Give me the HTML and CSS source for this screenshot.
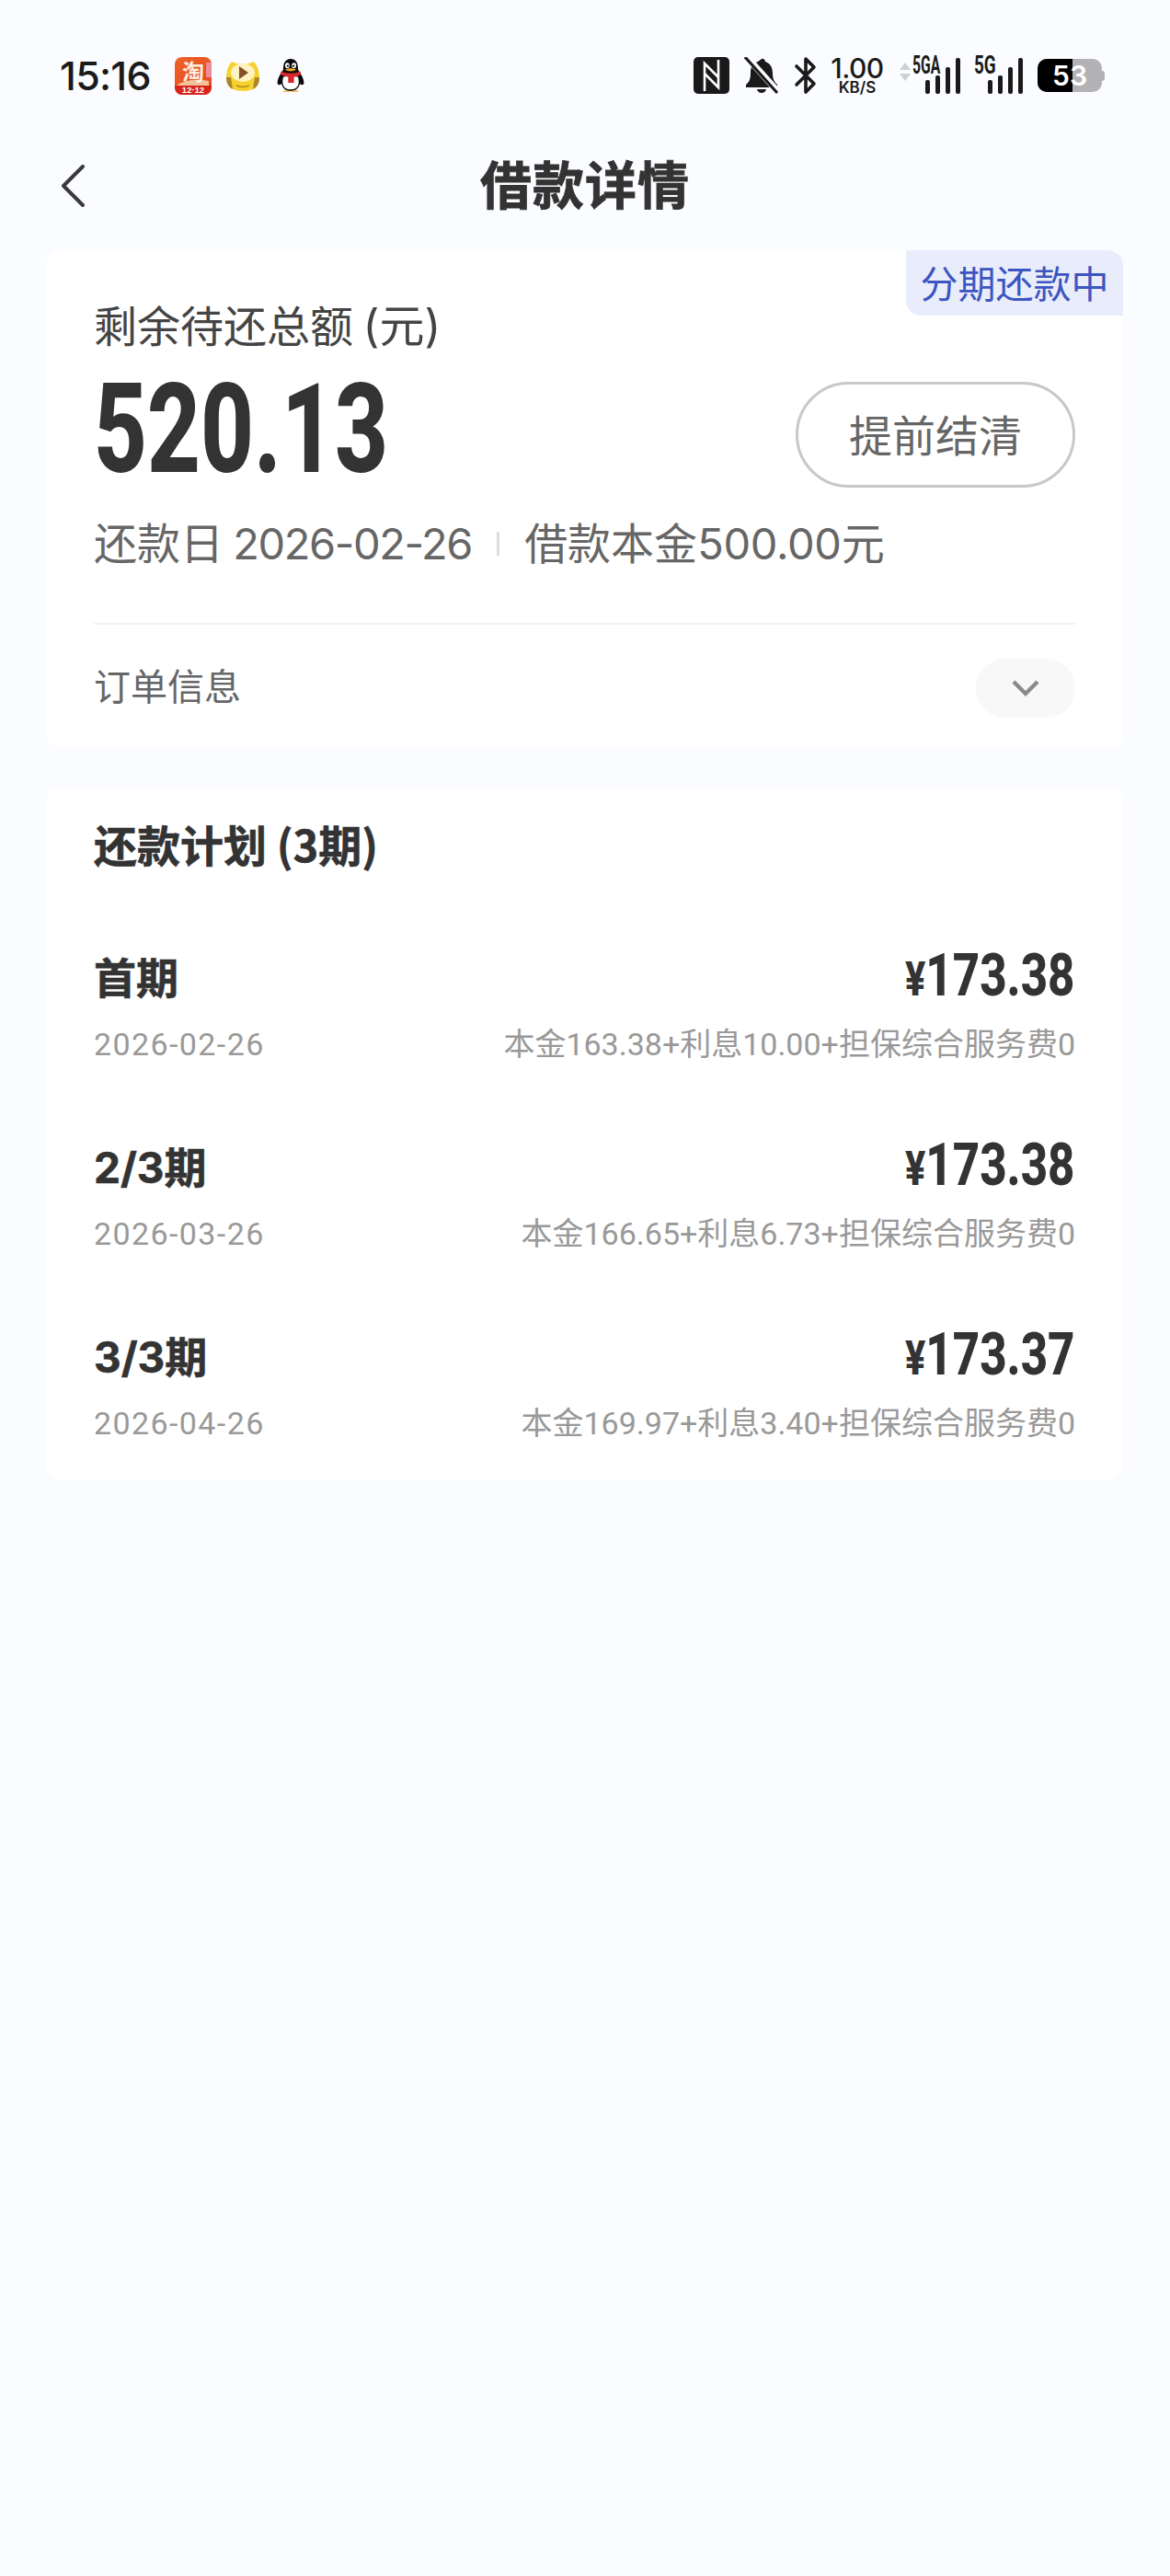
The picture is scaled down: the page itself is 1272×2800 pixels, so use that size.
FILE: index.html
```html
<!DOCTYPE html>
<html lang="zh-CN">
<head>
<meta charset="utf-8">
<title>借款详情</title>
<link rel="stylesheet" href="styles.css">
</head>
<body>
<div class="page">
  <header class="status">
    <div class="status-left">
      <span class="clock">15:16</span>
      <div class="apps">
        <svg class="app" width="40" height="41" viewBox="0 0 40 41"><defs><linearGradient id="tb" x1="0" y1="0" x2="1" y2="1"><stop offset="0" stop-color="#f0622a"/><stop offset="1" stop-color="#e4471e"/></linearGradient></defs><rect width="40" height="41" rx="8" fill="url(#tb)"/><path d="M34 6h6v16h-6z" fill="#ef8c9a"/><path d="M3 30q14-8 34-4v5H3z" fill="#f2c19c"/><path d="M0 31h40v2a8 8 0 0 1-8 8H8a8 8 0 0 1-8-8z" fill="#d9241b"/><text class="app-han" x="20" y="25">淘</text><text class="app-text" x="20" y="39">12·12</text></svg>
        <svg class="app" width="40" height="40" viewBox="0 0 40 40"><path d="M8 5q6 3 12 3t12-3q6 7 6 17q0 15-18 15Q2 37 2 22q0-10 6-17z" fill="#f6d22f"/><path d="M2 22q0 10 7 13l-2-13zM38 22q0 10-7 13l2-13z" fill="#a8862e"/><ellipse cx="20" cy="17" rx="13" ry="10" fill="#fdf3c0"/><path d="M16 10l10 7-10 7z" fill="#84502a"/><path d="M13 31q7 3 14 0" fill="none" stroke="#b78f1e" stroke-width="1.5"/></svg>
        <svg class="app" width="36" height="42" viewBox="0 0 40 42"><path d="M20 1c-7 0-9 6-9 13-3 5-7 10-7 16 0 3 3 3 5 1 1 5 5 9 11 9s10-4 11-9c2 2 5 2 5-1 0-6-4-11-7-16 0-7-2-13-9-13z" fill="#0c0c0c"/><path d="M11 23q9-3 18 0c2 8 0 15-9 15s-11-7-9-15z" fill="#fff"/><path d="M8 16q12 5 24 0v4q-4 3-8 3v7h-7v-7q-6-1-9-3z" fill="#d9262c"/><ellipse cx="16" cy="9" rx="2.6" ry="3.4" fill="#fff"/><ellipse cx="24" cy="9" rx="2.6" ry="3.4" fill="#fff"/><circle cx="16.5" cy="9.5" r="1.2" fill="#000"/><circle cx="23.5" cy="9.5" r="1.2" fill="#000"/><path d="M13 14q7-3 14 0-7 4-14 0z" fill="#f2a51f"/><path d="M11 40h8M21 40h8" stroke="#f2a51f" stroke-width="1.6"/></svg>
      </div>
    </div>
    <div class="status-right">
      <svg class="ic-nfc" width="39" height="40" viewBox="0 0 39 40"><rect width="39" height="40" rx="5" fill="#1a1a1a"/><path d="M12 37V7l15 15M27 3v30L12 18" fill="none" stroke="#fff" stroke-width="2.6"/></svg>
      <svg class="ic-bell" width="38" height="40" viewBox="0 0 38 40"><path d="M18 2a3 3 0 0 1 4 3c6 2 8 7 8 13 0 6 2 9 5 12v3H1v-3c4-3 5-7 5-13 0-7 3-10 8-12z" fill="#1a1a1a" transform="translate(1 0)"/><path d="M14 35h10q-1 4-5 4t-5-4z" fill="#1a1a1a"/><path d="M3 0l34 38" stroke="#fbfcff" stroke-width="7"/><path d="M1 0l35 39" stroke="#1a1a1a" stroke-width="3"/></svg>
      <svg class="ic-bt" width="26" height="42" viewBox="0 0 24 42"><path d="M2 11l19 19-9 9V3l9 9L2 31" fill="none" stroke="#1a1a1a" stroke-width="3.6" stroke-linejoin="round" stroke-linecap="round"/></svg>
      <div class="speed"><span class="speed-num">1.00</span><span class="speed-unit">KB/S</span></div>
      <div class="signal sig-a">
        <svg class="arrows" width="12" height="20" viewBox="0 0 12 20"><path d="M6 0l6 8H0zM6 20l6-8H0z" fill="#cfd0d2"/></svg>
        <span class="net net-a">5GA</span>
        <div class="bars"><i class="b1"></i><i class="b2"></i><i class="b3"></i><i class="b4"></i></div>
      </div>
      <div class="signal sig-b">
        <span class="net net-b">5G</span>
        <div class="bars"><i class="b1"></i><i class="b2"></i><i class="b3"></i><i class="b4"></i></div>
      </div>
      <div class="battery"><div class="batt-fill"></div><div class="batt-cap"></div><span class="batt-num">53</span></div>
    </div>
  </header>

  <nav class="nav">
    <svg class="back" width="28" height="46" viewBox="0 0 28 46"><path d="M24 2L3 23l21 21" fill="none" stroke="#3a3a3a" stroke-width="4" stroke-linecap="round" stroke-linejoin="round"/></svg>
    <h1 class="nav-title">借款详情</h1>
  </nav>

  <section class="card summary">
    <span class="badge">分期还款中</span>
    <div class="sum-label">剩余待还总额 <span class="paren">(元)</span></div>
    <div class="sum-main">
      <span class="sum-amount">520.13</span>
      <button class="settle">提前结清</button>
    </div>
    <div class="sum-meta">
      <span class="meta-date">还款日 <span class="num">2026-02-26</span></span>
      <i class="meta-sep"></i>
      <span class="meta-base">借款本金<span class="num-tight">500.00</span>元</span>
    </div>
    <div class="order">
      <span class="order-label">订单信息</span>
      <span class="order-toggle">
        <svg width="32" height="22" viewBox="0 0 32 22"><path d="M3 4l13 13L29 4" fill="none" stroke="#8a8a8a" stroke-width="4.4"/></svg>
      </span>
    </div>
  </section>

  <section class="card plan">
    <h2 class="plan-title">还款计划 (3期)</h2>
    <div class="rows">
      <div class="row">
        <div class="row-top"><span class="term">首期</span><span class="pay"><small>¥</small>173.38</span></div>
        <div class="row-sub"><span class="sub-date">2026-02-26</span><span>本金163.38+利息10.00+担保综合服务费0</span></div>
      </div>
      <div class="row">
        <div class="row-top"><span class="term">2/3期</span><span class="pay"><small>¥</small>173.38</span></div>
        <div class="row-sub"><span class="sub-date">2026-03-26</span><span>本金166.65+利息6.73+担保综合服务费0</span></div>
      </div>
      <div class="row">
        <div class="row-top"><span class="term">3/3期</span><span class="pay"><small>¥</small>173.37</span></div>
        <div class="row-sub"><span class="sub-date">2026-04-26</span><span>本金169.97+利息3.40+担保综合服务费0</span></div>
      </div>
    </div>
  </section>
</div>
</body>
</html>
```
FILE: styles.css
```css
* { box-sizing: border-box; }
html, body { margin: 0; padding: 0; }
body {
  width: 1272px;
  height: 2800px;
  background: #fbfcff;
  font-family: "Noto Sans CJK SC", "Inter", sans-serif;
  overflow: hidden;
}
.page { padding: 0 51px 0 50px; }

.status {
  height: 125px;
  margin: 0 -51px 0 -50px;
  padding: 60px 0 0 65px;
  display: flex;
  justify-content: space-between;
  align-items: flex-start;
}
.status-left { display: flex; align-items: center; gap: 26px; height: 44px; }
.clock { font: 500 43px/44px "Inter", sans-serif; color: #1a1a1a; letter-spacing: -.7px; }
.apps { display: flex; gap: 14px; align-items: center; }
.app { display: block; overflow: visible; }
.app-han { font: 700 24px "Noto Sans CJK SC", sans-serif; fill: #fdf0e0; text-anchor: middle; }
.app-text { font: 700 9.5px "Liberation Sans", sans-serif; fill: #fff; text-anchor: middle; }
.status-right { display: flex; align-items: center; height: 44px; padding-right: 74px; }
.ic-nfc { margin-right: 16px; }
.ic-bell { margin-right: 16px; }
.ic-bt { margin-right: 11px; }
.speed { display: flex; flex-direction: column; align-items: center; width: 64px; color: #1a1a1a; font-family: "Inter", sans-serif; }
.speed-num { font-size: 30px; font-weight: 500; line-height: 26px; letter-spacing: -.5px; }
.speed-unit { font-size: 17px; font-weight: 600; line-height: 16px; }
.signal { position: relative; height: 44px; }
.sig-a { width: 66px; margin-left: 14px; }
.sig-b { width: 53px; margin-left: 15px; }
.arrows { position: absolute; left: 0; top: 8px; }
.net { position: absolute; top: -4px; font: 700 27px/30px "Roboto", sans-serif; color: #1a1a1a; transform-origin: 0 50%; }
.net-a { left: 14px; transform: scaleX(.58); }
.net-b { left: 0; transform: scaleX(.7); }
.bars { position: absolute; right: 0; bottom: 2px; display: flex; align-items: flex-end; gap: 6px; }
.bars i { display: block; width: 5px; border-radius: 2px; background: #1a1a1a; }
.b1 { height: 15px; }
.b2 { height: 20px; }
.b3 { height: 29px; }
.b4 { height: 39px; }
.battery {
  position: relative;
  width: 70px;
  height: 36px;
  margin-left: 16px;
  border-radius: 10px;
  background: #b3b3b5;
}
.batt-fill { position: absolute; left: 0; top: 0; bottom: 0; width: 38px; background: #000; border-radius: 10px 0 0 10px; }
.batt-cap { position: absolute; right: -3px; top: 13px; width: 3px; height: 11px; border-radius: 0 3px 3px 0; background: #b3b3b5; }
.batt-num { position: absolute; left: 0; right: 0; top: 0; text-align: center; font: 600 30px/36px "Inter", sans-serif; color: #fff; }

.nav {
  height: 147px;
  position: relative;
  display: flex;
  align-items: center;
  justify-content: center;
  padding-bottom: 2px;
}
.back { position: absolute; left: 16px; top: 54px; }
.nav-title { margin: 0 0 0 1px; font-size: 56px; line-height: 78px; font-weight: 700; color: #333; letter-spacing: 1px; -webkit-text-stroke: .8px #333; }

.card { background: #fff; border-radius: 16px; position: relative; }
.summary { height: 541px; padding: 50px 52px 0 52px; overflow: hidden; }
.badge {
  position: absolute;
  right: 0;
  top: 0;
  width: 236px;
  height: 71px;
  background: #e9edfb;
  border-radius: 0 16px 0 16px;
  color: #3d55c0;
  font-size: 41px;
  line-height: 68px;
  text-align: center;
}
.sum-label { font-size: 47px; line-height: 60px; color: #444; }
.paren { font-family: "Inter", "Noto Sans CJK SC", sans-serif; font-size: 49px; }
.sum-main { display: flex; justify-content: space-between; align-items: center; height: 124px; margin-top: 25px; }
.sum-amount {
  display: inline-block;
  width: 316px;
  margin-bottom: 10px;
  font: 800 136px/124px "Roboto", sans-serif;
  color: #333;
  white-space: nowrap;
  transform-origin: 0 50%;
  transform: scaleX(.74);
}
.settle {
  width: 304px;
  height: 115px;
  border: 3px solid #c8c8c8;
  border-radius: 58px;
  background: #fff;
  color: #666;
  font-family: inherit;
  font-size: 47px;
  padding: 0 0 4px;
}
.sum-meta { display: flex; align-items: center; margin-top: 26px; font: 400 47px/62px "Inter", "Noto Sans CJK SC", sans-serif; color: #666; }
.meta-date { word-spacing: -3px; }
.num { letter-spacing: -1.4px; }
.num-tight { letter-spacing: -.3px; }
.meta-sep { display: block; width: 3px; height: 26px; background: #ddd; margin: 0 27px; }
.order {
  margin-top: 55px;
  border-top: 2px solid #f2f2f2;
  height: 136px;
  display: flex;
  justify-content: space-between;
  align-items: center;
}
.order-label { font-size: 40px; color: #666; margin-bottom: 5px; }
.order-toggle { width: 108px; height: 64px; margin-top: 4px; border-radius: 32px; background: #f8f8f8; display: flex; align-items: center; justify-content: center; }

.plan { margin-top: 43px; height: 752px; padding: 0 52px; }
.plan-title { margin: 0; padding-top: 31px; font-size: 47px; line-height: 60px; font-weight: 700; color: #333; -webkit-text-stroke: .6px #333; }
.rows { margin-top: 81px; display: flex; flex-direction: column; gap: 75px; }
.row-top { display: flex; justify-content: space-between; align-items: center; height: 70px; }
.term { font: 700 46px/60px "Inter", "Noto Sans CJK SC", sans-serif; color: #333; -webkit-text-stroke: .6px #333; }
.pay {
  display: inline-block;
  font: 800 64px/70px "Roboto", sans-serif;
  color: #333;
  white-space: nowrap;
  transform-origin: 100% 50%;
  transform: scaleX(.797);
}
.pay small { font-size: 52px; }
.row-sub { display: flex; justify-content: space-between; margin-top: 13px; font: 400 34px/48px "Roboto", "Noto Sans CJK SC", sans-serif; color: #999; }
.sub-date { letter-spacing: 1.4px; }
```
